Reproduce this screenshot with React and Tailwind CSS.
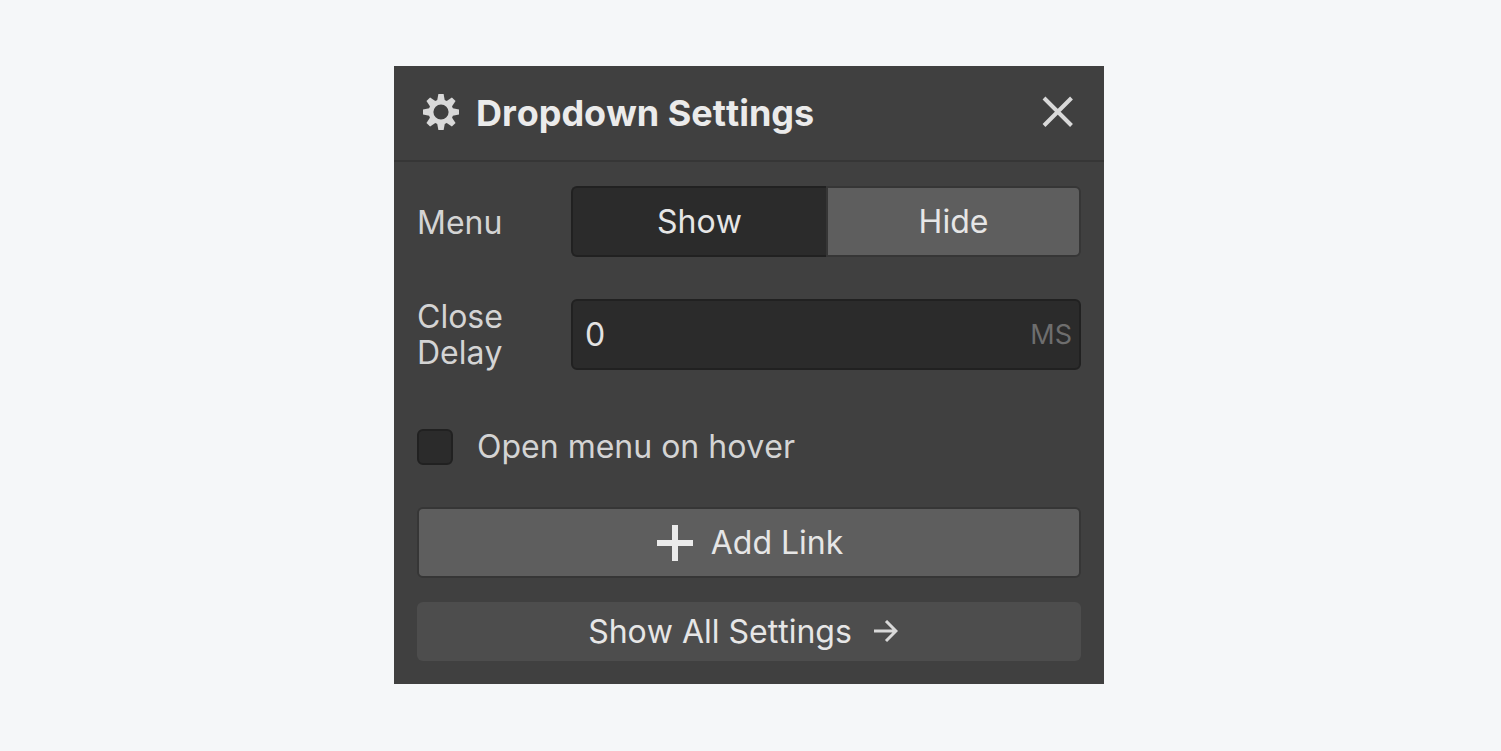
import { useState } from 'react'

const TOOTH_ANGLES = [0, 45, 90, 135, 180, 225, 270, 315]

function App() {
  const [menu, setMenu] = useState('show')
  const [delay, setDelay] = useState('0')
  const [openOnHover, setOpenOnHover] = useState(false)

  return (
    <div className="min-h-screen flex items-center justify-center pr-[3px] pb-px bg-[#f5f7f9] font-['Inter','Liberation_Sans',sans-serif] [font-kerning:none]">
      <section className="w-full max-w-[710px] bg-[#404040] text-[32px] leading-9 text-[#d4d4d4]">
        {/* Header */}
        <header className="flex items-center gap-[17px] h-24 pl-[29px] pr-[30px] pb-0.5 border-b-2 border-[#363636]">
          <GearIcon />
          <h1 className="flex-1 pt-0.5 text-4xl font-bold text-[#ebebeb]">Dropdown Settings</h1>
          <button type="button" aria-label="Close">
            <CloseIcon />
          </button>
        </header>

        <div className="flex flex-col px-[23px] pt-6 pb-[23px]">
          {/* Menu visibility */}
          <div className="flex items-center">
            <span id="menu-label" className="w-[154px] pt-0.5">Menu</span>
            <div role="group" aria-labelledby="menu-label" className="flex-1 grid grid-cols-2 h-[71px]">
              <MenuButton side="rounded-l-md" active={menu === 'show'} onClick={() => setMenu('show')}>
                Show
              </MenuButton>
              <MenuButton side="rounded-r-md" active={menu === 'hide'} onClick={() => setMenu('hide')}>
                Hide
              </MenuButton>
            </div>
          </div>

          {/* Close delay */}
          <div className="flex items-center mt-[41px]">
            <label htmlFor="close-delay" className="w-[154px] pt-px pr-12">Close Delay</label>
            <div className="flex-1 min-w-0 flex items-center h-[71px] pl-3 pr-[7px] bg-[#2b2b2b] border-2 border-[#212121] rounded-md">
              <input
                id="close-delay"
                type="text"
                value={delay}
                onChange={(e) => setDelay(e.target.value)}
                className="flex-1 min-w-0 bg-transparent text-[#e3e3e3] outline-none"
              />
              <span className="text-[27px] text-[#6e6e6e]">MS</span>
            </div>
          </div>

          {/* Hover option */}
          <label className="flex items-center gap-6 mt-[58px]">
            <input
              type="checkbox"
              checked={openOnHover}
              onChange={(e) => setOpenOnHover(e.target.checked)}
              className="appearance-none size-9 bg-[#2b2b2b] checked:bg-[#5e5e5e] border-2 border-[#212121] rounded-md"
            />
            Open menu on hover
          </label>

          {/* Actions */}
          <button
            type="button"
            className="flex items-center justify-center gap-[18px] h-[71px] mt-[42px] pl-0.5 bg-[#5e5e5e] border-2 border-[#363636] rounded-md text-[#e6e6e6]"
          >
            <PlusIcon />
            Add Link
          </button>
          <button
            type="button"
            className="flex items-center justify-center gap-[22px] h-[59px] mt-6 pr-3 bg-[#4d4d4d] rounded-md text-[#e6e6e6]"
          >
            Show All Settings
            <ArrowIcon />
          </button>
        </div>
      </section>
    </div>
  )
}

function MenuButton({ active, side, onClick, children }) {
  return (
    <button
      type="button"
      aria-pressed={active}
      onClick={onClick}
      className={`border-2 text-[#e6e6e6] ${side} ${
        active ? 'bg-[#2b2b2b] border-[#212121] border-r-0' : 'bg-[#5e5e5e] border-[#363636]'
      }`}
    >
      {children}
    </button>
  )
}

function GearIcon() {
  return (
    <svg className="w-9 h-9" viewBox="-18 -18 36 36" fill="#d9d9d9" aria-hidden="true">
      <circle r="10" fill="none" stroke="#d9d9d9" strokeWidth="4.8" />
      {TOOTH_ANGLES.map((angle) => (
        <path key={angle} d="M-4 -10.5L-2.6 -18H2.6L4 -10.5Z" transform={`rotate(${angle})`} />
      ))}
    </svg>
  )
}

function CloseIcon() {
  return (
    <svg className="w-8 h-8" viewBox="0 0 32 32" fill="none" stroke="#d9d9d9" strokeWidth="4" aria-hidden="true">
      <path d="M2 2L29.5 29.5M29.5 2L2 29.5" />
    </svg>
  )
}

function PlusIcon() {
  return (
    <svg className="w-9 h-9" viewBox="0 0 36 36" stroke="#ebebeb" strokeWidth="6" aria-hidden="true">
      <path d="M18 0V36M0 18H36" />
    </svg>
  )
}

function ArrowIcon() {
  return (
    <svg className="w-6 h-6" viewBox="0 0 24 24" fill="none" stroke="#d9d9d9" strokeWidth="3" aria-hidden="true">
      <path d="M0 11H22M12 1L22 11L12 21" />
    </svg>
  )
}

export default App
